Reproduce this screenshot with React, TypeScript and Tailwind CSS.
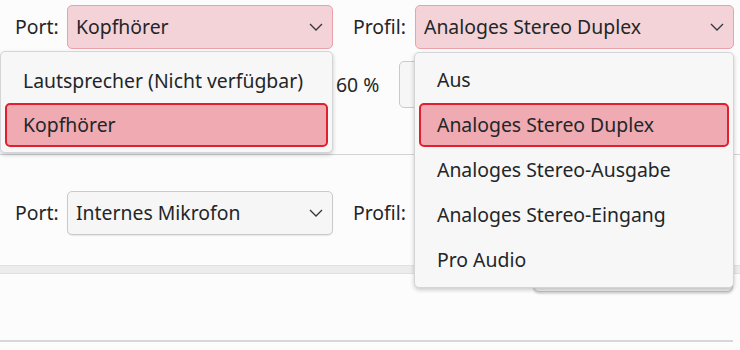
import React from 'react';

const Chevron = () => (
  <svg width="14" height="8" viewBox="0 0 14 8" className="shrink-0">
    <polyline points="1,1 7,7 13,1" fill="none" stroke="#31363b" strokeWidth="1.3" />
  </svg>
);

type ComboProps = {
  value: string;
  active?: boolean;
  className?: string;
};

const Combo = ({ value, active, className }: ComboProps) => (
  <div
    className={
      'h-[44px] rounded-[5px] border flex items-center justify-between pl-[8px] pr-[9px] ' +
      (active
        ? 'bg-[#f3d3d7] border-[#e9a1aa] '
        : 'bg-[#f6f6f6] border-[#c9cacb] shadow-[0_1px_1px_rgba(0,0,0,0.08)] ') +
      (className ?? '')
    }
  >
    <span className="truncate">{value}</span>
    <Chevron />
  </div>
);

const MenuItem = ({ label, selected }: { label: string; selected?: boolean }) => (
  <div
    className={
      'h-[44px] flex items-center rounded-[5px] border-2 px-[16px] ' +
      (selected ? 'bg-[#f0aab2] border-[#e0202f]' : 'border-transparent')
    }
  >
    {label}
  </div>
);

export default function App() {
  const profiles = [
    'Aus',
    'Analoges Stereo Duplex',
    'Analoges Stereo-Ausgabe',
    'Analoges Stereo-Eingang',
    'Pro Audio',
  ];

  return (
    <div className="relative w-[740px] h-[350px] overflow-hidden bg-[#fcfcfc] text-[#232629] text-[19.4px] font-['Noto_Sans',sans-serif]">
      {/* output device */}
      <div className="flex items-center pt-[5px] pl-[15px] pr-[6px]">
        <span className="w-[52px]">Port:</span>
        <Combo value="Kopfhörer" active className="w-[266px]" />
        <span className="ml-[20px] w-[62px]">Profil:</span>
        <Combo value="Analoges Stereo Duplex" active className="flex-1" />
      </div>
      <div className="flex items-center h-[47px] mt-[12px]">
        <span className="ml-[336px]">60 %</span>
        <div className="ml-[20px] h-[47px] w-[120px] rounded-[5px] border border-[#c9cacb] bg-[#f6f6f6]" />
      </div>
      <div className="mt-[46px] h-px bg-[#d2d3d4]" />

      {/* input device */}
      <div className="flex items-center mt-[36px] pl-[15px] pr-[6px]">
        <span className="w-[52px]">Port:</span>
        <Combo value="Internes Mikrofon" className="w-[266px]" />
        <span className="ml-[20px] w-[62px]">Profil:</span>
      </div>
      <div className="flex justify-end pr-[7px] mt-[13px]">
        <div className="w-[200px] h-[44px] rounded-[6px] border border-[#c0c1c2] bg-[#f0f0f0] shadow-[0_2px_2px_rgba(0,0,0,0.15)]" />
      </div>
      <div className="-mt-[27px] h-[9px] bg-[#ececec] border-y border-[#e0e0e0]" />
      <div className="mt-[66px] mr-[7px] h-[2px] bg-[#d6d7d8]" />

      {/* port popup */}
      <div className="absolute left-0 top-[51px] w-[333px] rounded-[5px] border border-[#d4d5d6] bg-[#f7f7f7] px-[4px] pt-[7px] pb-[5px] shadow-[0_2px_4px_rgba(0,0,0,0.2)]">
        <MenuItem label="Lautsprecher (Nicht verfügbar)" />
        <MenuItem label="Kopfhörer" selected />
      </div>

      {/* profile popup */}
      <div className="absolute left-[414px] top-[52px] w-[320px] rounded-[5px] border border-[#d4d5d6] bg-[#f7f7f7] px-[4px] pt-[5px] pb-[5px] shadow-[0_2px_4px_rgba(0,0,0,0.2)] flex flex-col gap-px">
        {profiles.map((p) => (
          <MenuItem key={p} label={p} selected={p === 'Analoges Stereo Duplex'} />
        ))}
      </div>
    </div>
  );
}
